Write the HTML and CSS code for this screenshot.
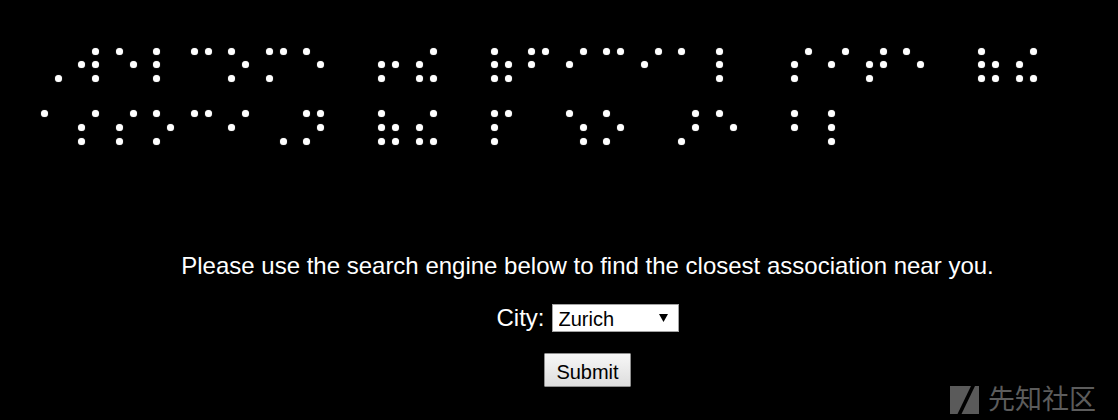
FILE: index.html
```html
<!DOCTYPE html>
<html lang="en">
<head>
<meta charset="utf-8">
<title>Association</title>
<link rel="stylesheet" href="styles.css">
</head>
<body>
<div class="braille" aria-label="Welcome to the official site of the association of the people who are blind">
  <p class="bline">⠠⠺⠑⠇⠉⠕⠍⠑ ⠖⠮ ⠷⠋⠊⠉⠊⠁⠇ ⠎⠊⠞⠑ ⠷⠮</p>
  <p class="bline">⠁⠎⠎⠕⠉⠊⠠⠝ ⠷⠮ ⠏ ⠱⠕ ⠜⠑ ⠃⠇</p>
</div>
<main class="content">
  <p class="intro">Please use the search engine below to find the closest association near you.</p>
  <form class="search" onsubmit="return false;">
    <div class="row">
      <label class="city-label" for="city">City:</label>
      <select id="city" class="city-select" name="city">
        <option>Zurich</option>
        <option>Geneva</option>
        <option>Bern</option>
      </select>
    </div>
    <button type="submit" class="submit">Submit</button>
  </form>
</main>
<div class="watermark">
  <svg class="wm-logo" width="29" height="28" viewBox="0 0 29 28" aria-hidden="true">
    <polygon points="0,0 21,0 7.5,28 0,28" fill="#5a5a5a"/>
    <polygon points="25,0 29,0 29,28 11.5,28" fill="#5a5a5a"/>
  </svg>
  <span class="wm-text">先知社区</span>
</div>
<script src="script.js"></script>
</body>
</html>
```
FILE: styles.css
```css
html, body {
  margin: 0;
  padding: 0;
  background: #000;
}
body {
  color: #fff;
  font-family: "Liberation Sans", Arial, sans-serif;
  width: 1118px;
  height: 420px;
  overflow: hidden;
  position: relative;
}
.braille {
  padding: 47.5px 0 0 40.8px;
  display: flex;
  flex-direction: column;
  gap: 28.7px;
}
.bline {
  margin: 0;
  display: flex;
}
.cell {
  position: relative;
  flex: none;
  width: 37.5px;
  display: grid;
  grid-template-columns: 7px 7px;
  grid-template-rows: 7px 7px 7px;
  grid-auto-flow: column;
  column-gap: 7px;
  row-gap: 6.65px;
}
.dot {
  display: block;
  width: 7px;
  height: 7px;
  border-radius: 50%;
}
.dot.on {
  background: #fff;
  box-shadow: 0 0 1px rgba(255, 255, 255, 0.6);
}
.glyph {
  position: absolute;
  left: 0;
  top: 0;
  font-family: "DejaVu Sans", sans-serif;
  font-size: 26px;
  line-height: 34px;
  color: transparent;
  pointer-events: none;
}
.content {
  margin-left: 57px;
  text-align: center;
}
.intro {
  margin: 106.9px 0 0;
  font-size: 24px;
  line-height: 28px;
}
.search {
  margin-top: 24.3px;
  display: flex;
  flex-direction: column;
  align-items: center;
  gap: 21.3px;
}
.row {
  display: flex;
  align-items: center;
  gap: 7px;
  font-size: 24px;
  line-height: 28px;
}
.city-select {
  -webkit-appearance: none;
  appearance: none;
  box-sizing: border-box;
  width: 127px;
  height: 28px;
  margin: 0;
  padding: 2px 0 0 6px;
  border: 1px solid #a3a3a3;
  border-radius: 0;
  background-color: #fff;
  background-image: url("data:image/svg+xml,%3Csvg xmlns='http://www.w3.org/2000/svg' width='9' height='8'%3E%3Cpolygon points='0,0 9,0 4.5,8' fill='%23000'/%3E%3C/svg%3E");
  background-repeat: no-repeat;
  background-position: right 10px center;
  color: #000;
  font-family: "Liberation Sans", Arial, sans-serif;
  font-size: 20px;
  line-height: 24px;
}
.submit {
  box-sizing: border-box;
  width: 87px;
  height: 34px;
  margin: 0;
  padding: 3px 0 0;
  border: 1px solid #8f8f8f;
  border-radius: 1px;
  background: linear-gradient(#f7f7f7, #dddddd);
  color: #000;
  font-family: "Liberation Sans", Arial, sans-serif;
  font-size: 20px;
  line-height: 24px;
}
.watermark {
  position: absolute;
  left: 950px;
  top: 383px;
  display: flex;
  align-items: flex-start;
  gap: 9px;
  color: #5c5c5c;
}
.wm-logo {
  margin-top: 3px;
  display: block;
}
.wm-text {
  font-family: "Noto Sans CJK SC", sans-serif;
  font-size: 27px;
  line-height: 30px;
}
```
FILE: script.js
```js
document.querySelectorAll('.bline').forEach(function (line) {
  var text = line.textContent;
  line.textContent = '';
  Array.from(text).forEach(function (ch) {
    var cell = document.createElement('span');
    cell.className = 'cell';
    var code = ch === ' ' ? 0 : ch.codePointAt(0) - 0x2800;
    for (var k = 0; k < 6; k++) {
      var d = document.createElement('i');
      d.className = 'dot' + ((code >> k) & 1 ? ' on' : '');
      cell.appendChild(d);
    }
    if (ch !== ' ') {
      var glyph = document.createElement('span');
      glyph.className = 'glyph';
      glyph.textContent = ch;
      cell.appendChild(glyph);
    }
    line.appendChild(cell);
  });
});
```
